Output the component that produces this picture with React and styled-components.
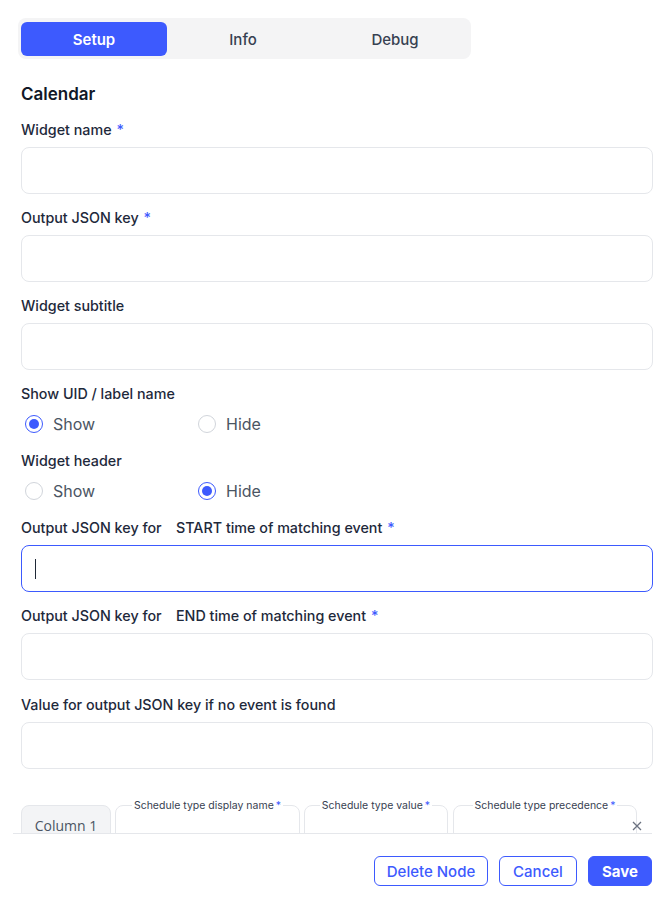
import React, { useState } from "react";
import styled, { createGlobalStyle } from "styled-components";

const GlobalStyle = createGlobalStyle`
  html, body {
    margin: 0;
    padding: 0;
    background: #ffffff;
    font-family: Inter, "Noto Sans", sans-serif;
  }
  * {
    box-sizing: border-box;
  }
`;

const Panel = styled.div`
  width: 667px;
  height: 898px;
  display: flex;
  flex-direction: column;
  background: #ffffff;
`;

const ScrollArea = styled.div`
  height: 833px;
  overflow: hidden;
  padding: 18px 14px 0 18px;
`;

const Tabs = styled.div`
  width: 453px;
  height: 41px;
  padding: 4px 3px 3px;
  background: #f4f4f5;
  border-radius: 8px;
  display: grid;
  grid-template-columns: 146px 152px 152px;
`;

const Tab = styled.button`
  border: none;
  border-radius: 6px;
  background: ${(p) => (p.$active ? "#3d5afe" : "transparent")};
  color: ${(p) => (p.$active ? "#ffffff" : "#374151")};
  font-family: inherit;
  font-size: 15px;
  font-weight: ${(p) => (p.$active ? 600 : 500)};
  cursor: pointer;
`;

const Form = styled.div`
  padding-left: 3px;
  display: flex;
  flex-direction: column;
`;

const Heading = styled.h2`
  margin: 24px 0 15px;
  font-size: 17px;
  line-height: 22px;
  font-weight: 600;
  color: #111827;
`;

const Field = styled.div`
  display: flex;
  flex-direction: column;
  margin-bottom: ${(p) => (p.$mb === undefined ? 14 : p.$mb)}px;
`;

const Label = styled.label`
  display: flex;
  align-items: center;
  font-size: 14.3px;
  line-height: 20px;
  font-weight: 450;
  color: #1e293b;
  white-space: nowrap;
  margin-bottom: 7px;
`;

const Clipped = styled.span`
  display: inline-block;
  width: 142px;
  overflow: hidden;
  margin-right: 13px;
`;

const Star = styled.span`
  color: #3d5afe;
  margin-left: 5px;
`;

const Input = styled.input`
  width: 632px;
  height: 47px;
  border: 1px solid #e5e7eb;
  border-radius: 8px;
  padding: 0 12px;
  font-family: inherit;
  font-size: 15px;
  color: #111827;
  outline: none;
`;

const FocusedInput = styled.div`
  width: 632px;
  height: 47px;
  flex-shrink: 0;
  border: 1px solid #3d5afe;
  border-radius: 8px;
  padding: 0 13px;
  display: flex;
  align-items: center;
`;

const Caret = styled.span`
  width: 1px;
  height: 20px;
  background: #1f2937;
`;

const RadioRow = styled.div`
  display: grid;
  grid-template-columns: 173px 173px;
  padding-left: 4px;
  height: 24px;
  margin: 1px 0 15px;
`;

const RadioOption = styled.label`
  display: flex;
  align-items: center;
  gap: 10px;
  font-size: 16px;
  color: #4b5563;
  cursor: pointer;
`;

const RadioCircle = styled.span`
  width: 18px;
  height: 18px;
  border-radius: 50%;
  border: 1.5px solid ${(p) => (p.$checked ? "#3d5afe" : "#d1d5db")};
  display: flex;
  align-items: center;
  justify-content: center;

  &::after {
    content: "";
    width: 10px;
    height: 10px;
    border-radius: 50%;
    background: ${(p) => (p.$checked ? "#3d5afe" : "transparent")};
  }
`;

const ColumnsRow = styled.div`
  display: flex;
  align-items: flex-start;
  gap: 4px;
  margin-top: 36px;
  position: relative;
`;

const ColumnTab = styled.div`
  width: 90px;
  height: 56px;
  background: #f3f4f6;
  border: 1px solid #e5e7eb;
  border-radius: 8px 8px 0 0;
  padding-top: 10px;
  text-align: center;
  font-family: "Open Sans", sans-serif;
  font-size: 14px;
  color: #4b5563;
`;

const Fieldset = styled.fieldset`
  width: ${(p) => p.$w}px;
  height: 60px;
  margin: -6px 0 0;
  margin-left: ${(p) => p.$ml || 0}px;
  padding: 0 10px;
  border: 1px solid #e5e7eb;
  border-radius: 8px;
`;

const Legend = styled.legend`
  padding: 0 2px;
  margin: 0 auto;
  font-size: 10.5px;
  color: #374151;
  white-space: nowrap;

  span {
    color: #3d5afe;
    margin-left: 2px;
  }
`;

const RemoveIcon = styled.svg`
  position: absolute;
  left: 611px;
  top: 16px;
`;

const Footer = styled.div`
  margin: 0 15px 0 13px;
  border-top: 1px solid #e5e7eb;
  padding-top: 22px;
  display: flex;
  justify-content: flex-end;
  gap: 11px;
`;

const Button = styled.button`
  height: 30px;
  width: ${(p) => p.$w}px;
  border-radius: 6px;
  border: 1px solid #3d5afe;
  background: ${(p) => (p.$primary ? "#3d5afe" : "#ffffff")};
  color: ${(p) => (p.$primary ? "#ffffff" : "#3d5afe")};
  font-family: inherit;
  font-size: 15px;
  font-weight: ${(p) => (p.$primary ? 700 : 500)};
  cursor: pointer;
`;

const Radios = ({ value, onChange }) => (
  <RadioRow>
    {["Show", "Hide"].map((opt) => (
      <RadioOption key={opt} onClick={() => onChange(opt)}>
        <RadioCircle $checked={value === opt} />
        {opt}
      </RadioOption>
    ))}
  </RadioRow>
);

const App = () => {
  const [tab, setTab] = useState("Setup");
  const [showUid, setShowUid] = useState("Show");
  const [header, setHeader] = useState("Hide");

  return (
    <>
      <GlobalStyle />
      <Panel>
        <ScrollArea>
          <Tabs>
            {["Setup", "Info", "Debug"].map((t) => (
              <Tab key={t} $active={tab === t} onClick={() => setTab(t)}>
                {t}
              </Tab>
            ))}
          </Tabs>

          <Form>
            <Heading>Calendar</Heading>

            <Field>
              <Label>
                Widget name<Star>*</Star>
              </Label>
              <Input />
            </Field>

            <Field>
              <Label>
                Output JSON key<Star>*</Star>
              </Label>
              <Input />
            </Field>

            <Field>
              <Label>Widget subtitle</Label>
              <Input />
            </Field>

            <Label>Show UID / label name</Label>
            <Radios value={showUid} onChange={setShowUid} />

            <Label>Widget header</Label>
            <Radios value={header} onChange={setHeader} />

            <Field $mb={14}>
              <Label>
                <Clipped>Output JSON key for event</Clipped>
                START time of matching event<Star>*</Star>
              </Label>
              <FocusedInput>
                <Caret />
              </FocusedInput>
            </Field>

            <Field $mb={15}>
              <Label>
                <Clipped>Output JSON key for event</Clipped>
                END time of matching event<Star>*</Star>
              </Label>
              <Input />
            </Field>

            <Field $mb={0}>
              <Label>Value for output JSON key if no event is found</Label>
              <Input />
            </Field>

            <ColumnsRow>
              <ColumnTab>Column 1</ColumnTab>
              <Fieldset $w={185}>
                <Legend>
                  Schedule type display name<span>*</span>
                </Legend>
              </Fieldset>
              <Fieldset $w={144}>
                <Legend>
                  Schedule type value<span>*</span>
                </Legend>
              </Fieldset>
              <Fieldset $w={184} $ml={1}>
                <Legend>
                  Schedule type precedence<span>*</span>
                </Legend>
              </Fieldset>
              <RemoveIcon width="10" height="10" viewBox="0 0 10 10">
                <path
                  d="M1 1 L9 9 M9 1 L1 9"
                  stroke="#6b7280"
                  strokeWidth="1.3"
                  fill="none"
                />
              </RemoveIcon>
            </ColumnsRow>
          </Form>
        </ScrollArea>

        <Footer>
          <Button $w={114}>Delete Node</Button>
          <Button $w={78}>Cancel</Button>
          <Button $w={64} $primary>
            Save
          </Button>
        </Footer>
      </Panel>
    </>
  );
};

export default App;
